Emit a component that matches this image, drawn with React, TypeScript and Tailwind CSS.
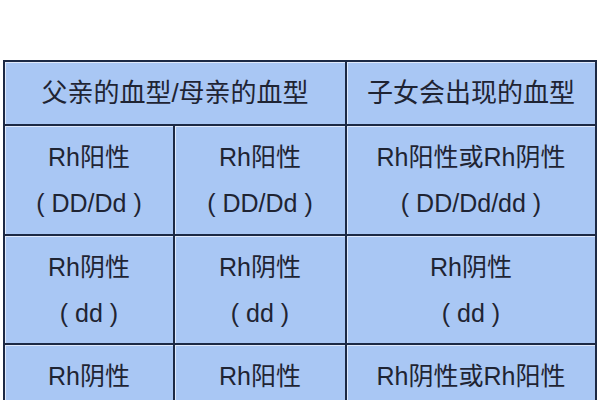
const font = '[font-family:"Liberation_Sans","Noto_Sans_CJK_SC",sans-serif]';

type Cell = { lines: string[]; span?: boolean };

const rows: Cell[][] = [
  [{ lines: ["Rh阳性", "( DD/Dd )"] }, { lines: ["Rh阳性", "( DD/Dd )"] }, { lines: ["Rh阳性或Rh阴性", "( DD/Dd/dd )"] }],
  [{ lines: ["Rh阴性", "( dd )"] }, { lines: ["Rh阴性", "( dd )"] }, { lines: ["Rh阴性", "( dd )"] }],
  [{ lines: ["Rh阴性", "( dd )"] }, { lines: ["Rh阳性", "( DD/Dd )"] }, { lines: ["Rh阴性或Rh阳性", "( DD/Dd/dd )"] }],
];

function TableCell({ lines, className = "" }: { lines: string[]; className?: string }) {
  return (
    <div
      className={`flex flex-col items-center justify-center bg-[#a9c7f4] text-[25px] leading-[46px] text-[#1f2433] shadow-[inset_1px_1px_0_#dfe9fb] ${className}`}
    >
      {lines.map((l, i) => (
        <div key={i} className="whitespace-pre">
          {l}
        </div>
      ))}
    </div>
  );
}

export default function App() {
  return (
    <div className={`h-[400px] w-[600px] overflow-hidden bg-white pl-[3px] pt-[60px] ${font}`}>
      <div className="grid w-[594px] grid-cols-[168px_170px_248px] grid-rows-[62px_108px_107px_108px] gap-[2px] bg-[#1c2944] p-[2px]">
        <div className="col-span-2 flex items-center justify-center bg-[#a9c7f4] text-[26px] text-[#1f2433] shadow-[inset_1px_1px_0_#dfe9fb]">
          父亲的血型/母亲的血型
        </div>
        <div className="flex items-center justify-center bg-[#a9c7f4] text-[26px] text-[#1f2433] shadow-[inset_1px_1px_0_#dfe9fb]">
          子女会出现的血型
        </div>
        {rows.map((row, r) =>
          row.map((cell, c) => <TableCell key={`${r}-${c}`} lines={cell.lines} />)
        )}
      </div>
    </div>
  );
}
